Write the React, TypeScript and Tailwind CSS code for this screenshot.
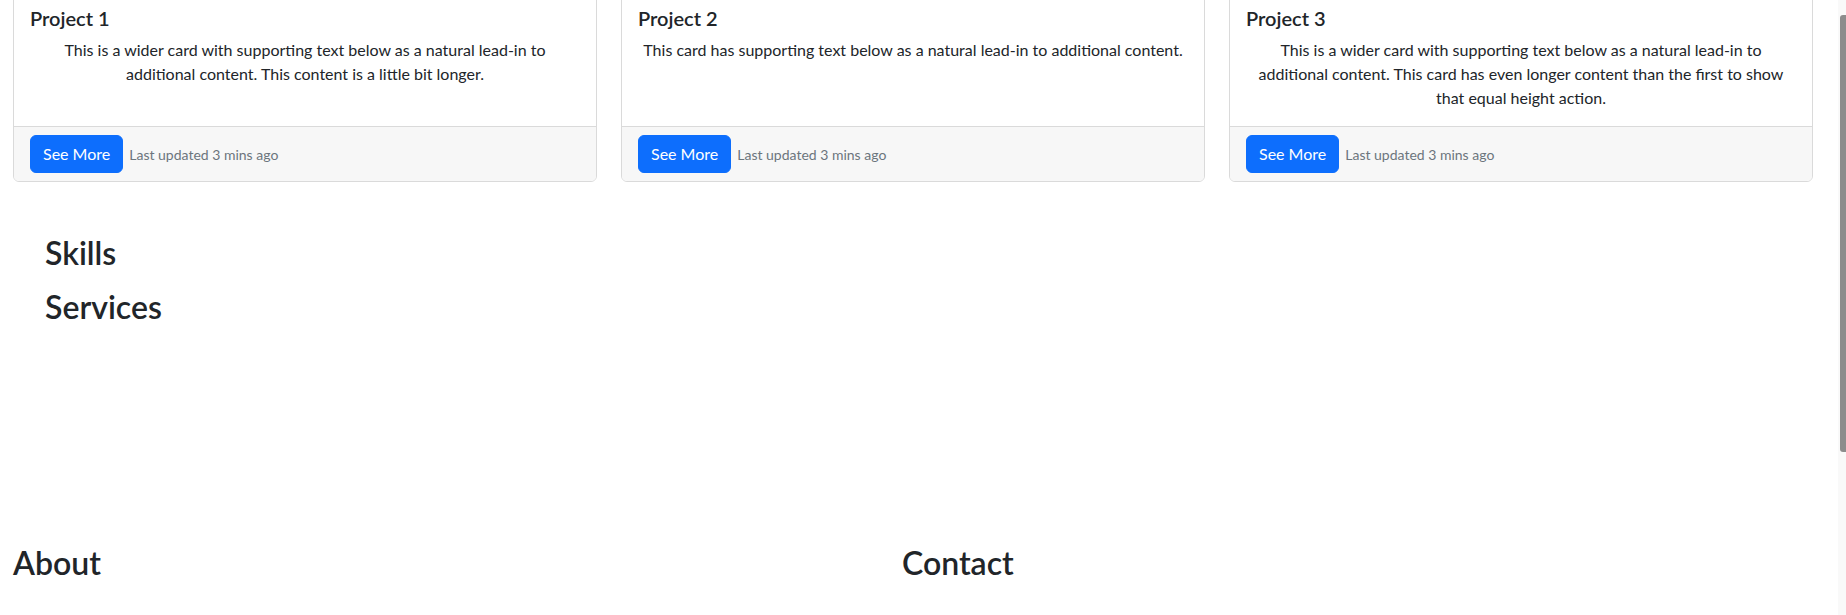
import React from 'react';

type Project = {
  title: string;
  text: string;
};

const projects: Project[] = [
  {
    title: 'Project 1',
    text: 'This is a wider card with supporting text below as a natural lead-in to additional content. This content is a little bit longer.',
  },
  {
    title: 'Project 2',
    text: 'This card has supporting text below as a natural lead-in to additional content.',
  },
  {
    title: 'Project 3',
    text: 'This is a wider card with supporting text below as a natural lead-in to additional content. This card has even longer content than the first to show that equal height action.',
  },
];

const ProjectCard: React.FC<{ project: Project }> = ({ project }) => (
  <div className="w-[584px] flex flex-col border border-[#dadada] rounded-md bg-white overflow-hidden">
    <div className="flex-1 p-4">
      <h5 className="text-[20px] leading-[24px] font-semibold mb-2">{project.title}</h5>
      <p className="text-center text-[16px] leading-6">{project.text}</p>
    </div>
    <div className="flex items-center border-t border-[#dadada] bg-[#f7f7f7] px-4 py-2">
      <button className="bg-[#0d6efd] border border-[#0d6efd] text-white text-[16px] leading-6 px-3 py-1.5 rounded-md">
        See More
      </button>
      <small className="ml-1.5 text-[14px] text-[#6c757d]">Last updated 3 mins ago</small>
    </div>
  </div>
);

const App: React.FC = () => {
  return (
    <div className="flex h-[615px] overflow-hidden bg-white text-[#212529] font-['Lato',sans-serif]">
      <main className="flex-1 flex flex-col">
        {/* Projects */}
        <section className="flex gap-6 pl-[13px] -mt-[11px]">
          {projects.map((p) => (
            <ProjectCard key={p.title} project={p} />
          ))}
        </section>

        {/* Skills & Services */}
        <section className="pl-[45px] mt-[52px] flex flex-col gap-4">
          <h2 className="text-[32px] leading-[38.4px] font-semibold">Skills</h2>
          <h2 className="text-[32px] leading-[38.4px] font-semibold">Services</h2>
        </section>

        {/* About & Contact */}
        <section className="grid grid-cols-[889px_1fr] pl-[13px] mt-[217px]">
          <h2 className="text-[32px] leading-[38.4px] font-semibold">About</h2>
          <h2 className="text-[32px] leading-[38.4px] font-semibold">Contact</h2>
        </section>
      </main>

      {/* scrollbar */}
      <div className="w-2 bg-[#f9f9f9] pt-[15px]">
        <div className="ml-0.5 h-[437px] bg-[#8c8c8c] rounded-l-[3px]" />
      </div>
    </div>
  );
};

export default App;
